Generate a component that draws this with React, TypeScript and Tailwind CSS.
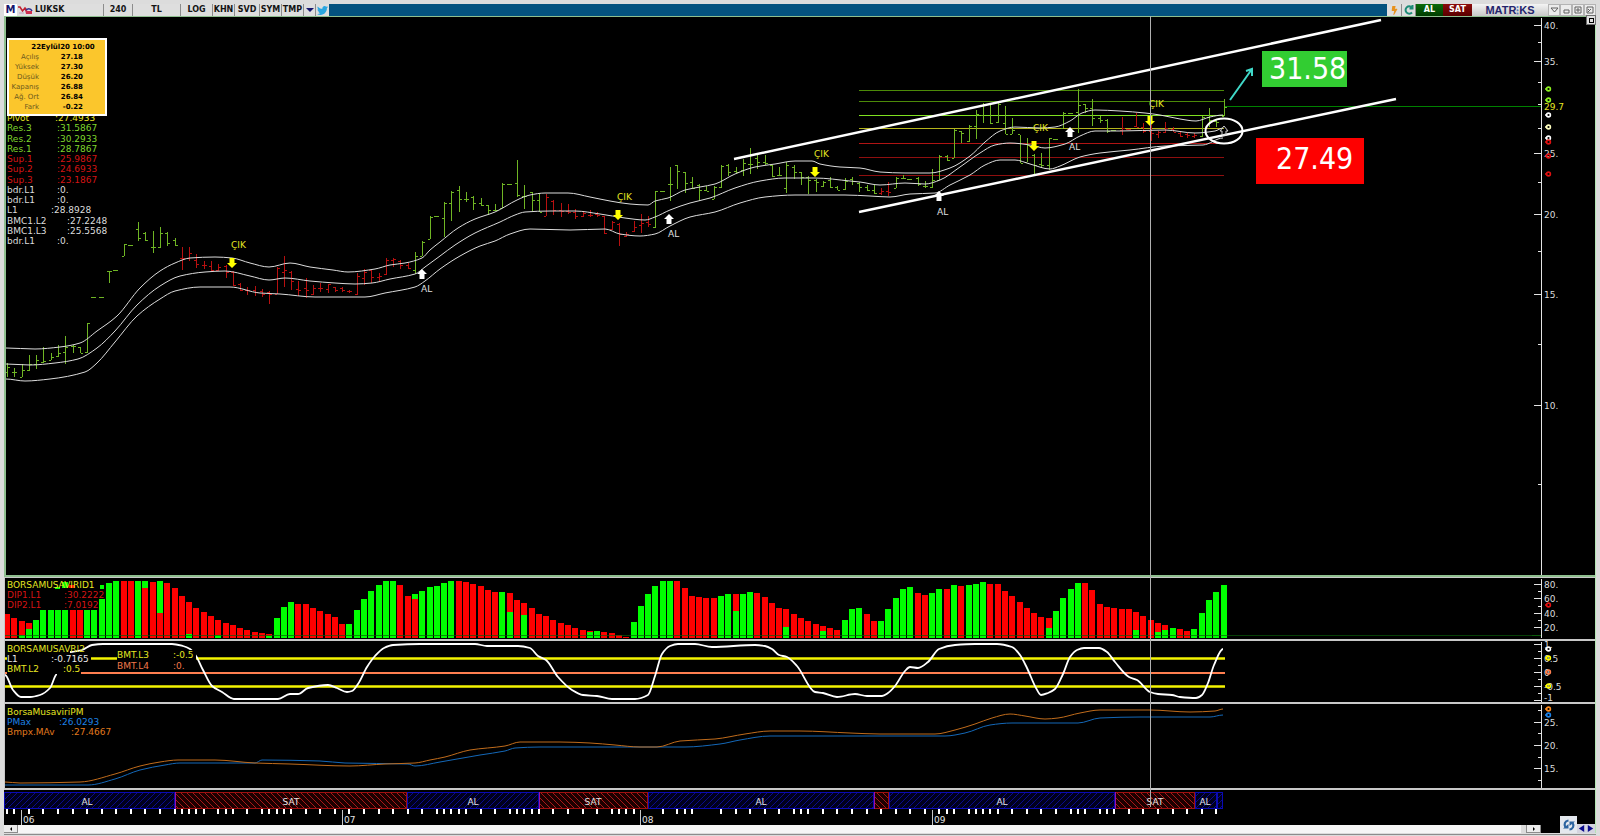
import type { ReactNode } from "react";
import { FaBolt, FaTwitter } from "react-icons/fa";

const LIME = "#7fd62c";
const RED = "#d41414";
const STEP = 7.285;
const barX = (i: number) => 7 + i * STEP;

type Point = [number, number];
type Ohlc = [high: number, low: number, open: number, close: number];

// One row per bar, in chart coordinates. Rows with a single value are flat bars.
const PRICES: (Ohlc | [number])[] = [
  [363, 377, 372, 367], [368, 377, 372, 372], [364, 377, 377, 370], [355, 371, 370, 364], [355, 369, 364, 360],
  [347, 363, 362, 361], [353, 360, 360, 357], [345, 357, 356, 353], [336, 364, 352, 347], [345, 353, 346, 346],
  [347, 353, 347, 353], [323, 353, 352, 323], [297], [297], [271, 283, 271, 271],
  [270], [244, 256, 256, 244], [245], [222, 241, 229, 238], [232, 241, 233, 240],
  [231, 253, 247, 247], [227, 248, 247, 233], [232, 246, 233, 243], [238, 246, 240, 245], [247, 270, 258, 258],
  [247, 261, 258, 253], [254, 268, 260, 264], [261, 269, 265, 265], [261, 271, 266, 270], [264, 271, 270, 267],
  [265, 278, 266, 272], [271, 286, 272, 285], [283, 291, 284, 290], [287, 295, 290, 290], [286, 296, 290, 292],
  [289, 297, 291, 294], [291, 304, 292, 294], [267, 294, 294, 268], [256, 287, 272, 270], [271, 290, 272, 281],
  [281, 296, 289, 290], [278, 298, 288, 290], [285, 295, 294, 288], [283, 292, 288, 288], [284, 293, 289, 284],
  [287, 292, 287, 290], [287, 292, 288, 290], [290, 293, 291, 291], [273, 295, 294, 276], [269, 285, 278, 272],
  [270, 283, 270, 277], [273, 281, 277, 276], [258, 275, 274, 260], [258, 267, 260, 259], [260, 269, 261, 265],
  [263, 269, 265, 268], [252, 274, 270, 256], [241, 256, 256, 242], [216, 239, 239, 217], [216],
  [202, 237, 218, 203], [191, 221, 203, 192], [186, 212, 190, 199], [192, 202, 199, 199], [196, 210, 197, 203],
  [198, 206, 203, 205], [205, 215, 205, 210], [204, 211, 210, 210], [183, 208, 208, 184], [184],
  [160, 197, 183, 195], [185, 209, 196, 196], [192, 211, 192, 200], [193, 212, 200, 212], [194, 216, 216, 197],
  [200, 215, 201, 210], [203, 217, 210, 211], [204, 214, 211, 212], [209, 219, 212, 216], [211, 217, 216, 213],
  [210, 217, 215, 215], [212, 217, 214, 215], [216, 234, 216, 233], [221, 230, 229, 222], [223, 246, 224, 234],
  [232, 237, 236, 234], [221, 232, 231, 227], [214, 233, 225, 223], [216, 227, 222, 224], [191, 228, 227, 191],
  [191], [167, 201, 184, 184], [165, 189, 165, 171], [172, 193, 172, 183], [177, 189, 182, 188],
  [184, 201, 185, 190], [186, 191, 190, 191], [186, 199, 199, 187], [165, 188, 187, 166], [164, 176, 165, 172],
  [167, 173, 171, 172], [159, 176, 170, 163], [148, 174, 164, 164], [154, 169, 158, 162], [155, 165, 162, 163],
  [165, 177, 165, 176], [167, 176, 175, 175], [162, 193, 188, 165], [165, 179, 167, 172], [172, 185, 172, 177],
  [176, 194, 177, 180], [179, 192, 180, 182], [181, 187, 186, 182], [177, 188, 180, 187], [186, 190, 187, 190],
  [178, 190, 189, 181], [177, 185, 179, 181], [182, 192, 183, 187], [185, 191, 187, 190], [185, 194, 190, 193],
  [188, 195, 193, 191], [182, 196, 191, 192], [177, 188, 188, 178], [175, 179, 178, 178], [179],
  [177, 186, 178, 184], [181, 188, 186, 186], [169, 188, 187, 180], [155, 180, 180, 156], [155, 161, 156, 160],
  [129, 158, 158, 130], [131, 143, 131, 133], [125, 142, 141, 126], [110, 139, 126, 114], [103, 123, 115, 104],
  [104, 124, 104, 123], [103, 123, 122, 104], [106, 134, 123, 134], [118, 134, 134, 130], [135, 163, 134, 163],
  [138, 162, 162, 145], [154, 174, 155, 165], [153, 167, 164, 165], [138, 170, 165, 138], [139],
  [112, 128, 128, 113], [113], [89, 133, 112, 105], [104, 113, 104, 108], [99, 126, 108, 118],
  [116, 123, 118, 120], [119, 133, 120, 131], [130], [117, 135, 130, 128], [129],
  [113, 127, 126, 127], [123, 133, 127, 131], [125, 141, 131, 133], [131, 138, 134, 132], [122, 133, 132, 128],
  [127, 132, 129, 132], [131, 137, 133, 136], [132, 138, 134, 135], [133, 138, 136, 135], [116, 137, 136, 117],
  [108, 127, 117, 120], [120, 127, 121, 122], [99, 116, 116, 107],
];

// Bars inside these index ranges belong to a sell phase and are drawn red.
const SELL_RANGES: Point[] = [[24, 55], [74, 88], [120, 121], [153, 163]];
const isSell = (i: number) => SELL_RANGES.some(([a, b]) => i >= a && i <= b);

const UPPER: Point[] = [
  [6, 348], [35, 349], [60, 347], [80, 343], [97, 331], [117, 316], [140, 288], [160, 271], [175, 263], [190, 258],
  [215, 257], [232, 258], [250, 263], [269, 267], [290, 263], [310, 267], [333, 270], [348, 272], [375, 269],
  [390, 265], [405, 263], [422, 258], [430, 250], [440, 242], [458, 228], [475, 219], [495, 212], [517, 200],
  [530, 195], [545, 193], [568, 193], [590, 197], [610, 201], [630, 204], [648, 205], [655, 201], [668, 198],
  [685, 190], [700, 187], [715, 184], [735, 174], [755, 167], [775, 164], [795, 161], [812, 161], [820, 164],
  [840, 167], [860, 168], [880, 172], [905, 173], [930, 173], [950, 168], [970, 156], [985, 142], [1000, 131],
  [1015, 127], [1040, 128], [1055, 127], [1070, 121], [1082, 113], [1095, 110], [1120, 111], [1145, 113],
  [1160, 115], [1180, 119], [1196, 121], [1210, 117], [1223, 115],
];
const MIDDLE: Point[] = [
  [6, 364], [30, 365], [55, 363], [78, 359], [97, 348], [115, 331], [137, 305], [160, 286], [180, 276], [205, 272],
  [225, 271], [250, 276], [269, 280], [285, 278], [310, 281], [335, 283], [355, 284], [372, 283], [390, 279],
  [415, 274], [425, 267], [440, 256], [455, 245], [475, 233], [500, 222], [515, 215], [525, 212], [550, 211],
  [575, 211], [600, 214], [625, 218], [645, 220], [655, 217], [670, 210], [690, 203], [710, 198], [735, 188],
  [760, 181], [785, 178], [815, 178], [850, 181], [860, 182], [880, 185], [905, 183], [925, 184], [940, 180],
  [960, 167], [980, 153], [995, 145], [1010, 143], [1030, 145], [1045, 148], [1065, 144], [1080, 136], [1095, 131],
  [1120, 131], [1165, 130], [1195, 133], [1215, 131], [1223, 128],
];
const LOWER: Point[] = [
  [6, 379], [25, 381], [50, 379], [85, 372], [97, 363], [115, 342], [137, 316], [160, 299], [175, 291], [200, 287],
  [230, 287], [260, 293], [280, 294], [315, 297], [365, 297], [385, 293], [415, 287], [425, 281], [440, 269],
  [460, 256], [480, 246], [495, 241], [510, 234], [530, 229], [570, 230], [605, 229], [620, 234], [640, 236],
  [655, 234], [670, 226], [690, 217], [715, 212], [740, 203], [765, 197], [795, 195], [845, 195], [870, 196],
  [890, 197], [910, 194], [935, 193], [950, 185], [970, 175], [985, 165], [1000, 160], [1015, 160], [1030, 164],
  [1050, 169], [1060, 166], [1080, 157], [1100, 153], [1130, 150], [1165, 146], [1203, 145], [1223, 138],
];

// Histogram: colour + height in thirds of a pixel; "/n" is a stacked lower part in the other colour.
const HISTOGRAM = (
  "r72 r60 r52/10 r44/26 g54 g86 g86 g86 g86 r86 r86 g86 g86 g117 g166 g171 r171 r171 g171 g171/151 " +
  "r168 g171/76 r166 r150 r127 r108/12 r91 r78 r66 r55/9 r45 r38 r30 r24 r19 r15 r11/6 g60 g93 g108 " +
  "r103 r103 r90 r81 r73 r63 r42 g42 g84 g117 g142 g160 g171 g171 r159 r125 g132/117 g142 g153 g157 " +
  "g165 g171 r171 r168 r163 r156 r144 r138 g138 r135/78 r114 r104/69 r89 r72 r66 r55 r45 r38 r30 r24 " +
  "r22/18 g22 r18 r15 r9 r4 g48 g96 g132 g156 g171 g171 r171 r150 r126 r122 r120 r120 g126 g132 " +
  "r132/82 g132 g139 r135 r123 r104 r90 r86/32 r72 r60 r51 r42 r37/22 r30 r24 g53 g87 g91 r73 r51 " +
  "g51 g87 g120 g147 g153 r135 r129 g135 g147 r147 g159 r156 g159 g162 g168 r161 r161 r142 r126 r108 " +
  "r91 r75 r63 r60/30 g81 g120 g147 g166 r166 r144 r102 r93 r90 r88 r88 r78/24 r66 r55 r45/18 r39/24 " +
  "g30 r27 r22 g27 g75 g114 g139 g160"
).split(" ");

const OSC_START: Point[] = [[5, 675], [13, 690], [21, 697], [30, 697], [40, 695], [50, 688], [57, 674]];
const OSC: Point[] = [
  [70, 652], [82, 650], [92, 645], [103, 644], [172, 644], [183, 646], [190, 649], [196, 656], [203, 670], [212, 686],
  [222, 692], [234, 699], [278, 699], [290, 694], [298, 694], [308, 688], [328, 685], [337, 688], [347, 692],
  [352, 691], [358, 684], [367, 667], [375, 656], [384, 648], [393, 645], [420, 644], [475, 644], [487, 646],
  [518, 646], [530, 648], [538, 656], [546, 660], [558, 677], [572, 690], [583, 695], [597, 696], [612, 699],
  [635, 699], [648, 695], [655, 676], [662, 654], [670, 646], [678, 644], [695, 644], [712, 647], [755, 645],
  [765, 646], [772, 649], [779, 655], [787, 657], [797, 666], [815, 692], [823, 693], [837, 697], [855, 694],
  [867, 696], [882, 696], [888, 693], [895, 686], [905, 671], [910, 667], [918, 668], [928, 662], [939, 649],
  [955, 645], [975, 644], [997, 644], [1012, 647], [1020, 655], [1027, 668], [1036, 688], [1041, 695], [1048, 693],
  [1055, 689], [1063, 674], [1070, 657], [1077, 650], [1084, 648], [1099, 648], [1107, 652], [1115, 662],
  [1129, 677], [1137, 680], [1150, 692], [1158, 694], [1172, 695], [1180, 697], [1196, 698], [1202, 695],
  [1208, 683], [1214, 665], [1223, 649],
];

const MAV: Point[] = [
  [5, 782], [20, 783], [80, 782], [115, 774], [140, 766], [160, 762], [178, 760], [215, 760], [255, 763], [290, 764],
  [350, 766], [385, 764], [415, 763], [430, 760], [445, 757], [470, 750], [505, 746], [520, 742], [560, 742],
  [590, 743], [615, 745], [640, 747], [657, 747], [680, 741], [715, 739], [745, 734], [770, 731], [800, 731],
  [850, 733], [880, 734], [935, 734], [955, 730], [975, 724], [992, 718], [1010, 714], [1025, 716], [1045, 719],
  [1058, 718], [1080, 713], [1100, 710], [1150, 710], [1190, 712], [1215, 711], [1223, 709],
];
const PMAX: Point[] = [
  [5, 785], [88, 785], [115, 779], [140, 770], [165, 765], [180, 763], [255, 763], [262, 760], [320, 761], [345, 763],
  [408, 764], [415, 766], [440, 762], [480, 755], [505, 751], [515, 748], [540, 747], [685, 747], [720, 744],
  [740, 740], [770, 736], [945, 736], [965, 733], [990, 725], [1012, 723], [1078, 723], [1100, 718], [1140, 717],
  [1210, 717], [1223, 715],
];

const PHASES = [
  { from: 4, to: 175, sell: false, label: "AL", at: 87 },
  { from: 175, to: 407, sell: true, label: "SAT", at: 291 },
  { from: 407, to: 539, sell: false, label: "AL", at: 473 },
  { from: 539, to: 648, sell: true, label: "SAT", at: 593 },
  { from: 648, to: 874, sell: false, label: "AL", at: 761 },
  { from: 874, to: 889, sell: true, label: "", at: 0 },
  { from: 889, to: 1115, sell: false, label: "AL", at: 1002 },
  { from: 1115, to: 1195, sell: true, label: "SAT", at: 1155 },
  { from: 1195, to: 1217, sell: false, label: "AL", at: 1205 },
  { from: 1217, to: 1223, sell: false, label: "", at: 0 },
];

const DAY_TICKS = [
  0, 1, 3, 5, 7, 9, 11, 13, 15, 17, 19, 21, 23, 24, 25, 26, 27, 29, 30, 31, 33, 35, 36, 37, 38, 39, 41, 43, 45, 47, 49,
  51, 53, 55, 57, 59, 60, 61, 62, 63, 65, 67, 69, 70, 71, 72, 73, 75, 77, 79, 81, 83, 84, 85, 86, 90, 92, 93, 94, 98,
  100, 102, 104, 106, 108, 109, 110, 112, 114, 116, 118, 120, 122, 124, 126, 128, 129, 130, 132, 133, 134, 135, 136,
  138, 140, 142, 144, 146, 147, 148, 150, 151, 152, 154, 156, 158, 160, 162, 164, 166,
];

const MONTHS = [
  { x: 21, label: "06" },
  { x: 342, label: "07" },
  { x: 640, label: "08" },
  { x: 932, label: "09" },
];

const SIGNALS = [
  { x: 232, y: 263, up: false, tx: 231, ty: 248 },
  { x: 422, y: 274, up: true, tx: 421, ty: 292 },
  { x: 618, y: 215, up: false, tx: 617, ty: 200 },
  { x: 669, y: 219, up: true, tx: 668, ty: 237 },
  { x: 815, y: 172, up: false, tx: 814, ty: 157 },
  { x: 939, y: 196, up: true, tx: 937, ty: 215 },
  { x: 1034, y: 146, up: false, tx: 1033, ty: 131 },
  { x: 1070, y: 132, up: true, tx: 1069, ty: 150 },
  { x: 1150, y: 121, up: false, tx: 1149, ty: 107 },
];

const LEVELS = [
  { y: 90, color: "#4c8a08" },
  { y: 101, color: "#4c8a08" },
  { y: 115, color: "#7fe020" },
  { y: 128, color: "#b4b41c" },
  { y: 143, color: "#b01414" },
  { y: 157, color: "#8f0f0f" },
  { y: 175, color: "#8f0f0f" },
];

type LegendRow = { name: string; value: string; x: number; y: number; color: string; nx?: number; back?: number };

const MAIN_LEGEND: LegendRow[] = [
  { name: "Pivot", value: ":27.4933", x: 55, y: 121, color: "#e6e622" },
  { name: "Res.3", value: ":31.5867", x: 57, y: 131, color: LIME },
  { name: "Res.2", value: ":30.2933", x: 57, y: 142, color: LIME },
  { name: "Res.1", value: ":28.7867", x: 57, y: 152, color: LIME },
  { name: "Sup.1", value: ":25.9867", x: 57, y: 162, color: RED },
  { name: "Sup.2", value: ":24.6933", x: 57, y: 172, color: RED },
  { name: "Sup.3", value: ":23.1867", x: 57, y: 183, color: RED },
  { name: "bdr.L1", value: ":0.", x: 57, y: 193, color: "#dcdcdc" },
  { name: "bdr.L1", value: ":0.", x: 57, y: 203, color: "#dcdcdc" },
  { name: "L1", value: ":28.8928", x: 51, y: 213, color: "#dcdcdc" },
  { name: "BMC1.L2", value: ":27.2248", x: 67, y: 224, color: "#dcdcdc" },
  { name: "BMC1.L3", value: ":25.5568", x: 67, y: 234, color: "#dcdcdc" },
  { name: "bdr.L1", value: ":0.", x: 57, y: 244, color: "#dcdcdc" },
];

const QUOTE = [
  ["Açılış", "27.18"],
  ["Yüksek", "27.30"],
  ["Düşük", "26.20"],
  ["Kapanış", "26.88"],
  ["Ağ. Ort", "26.84"],
  ["Fark", "-0.22"],
];

// Smooth path through the points: tangents are flat at turning points, so it never overshoots.
function curve(pts: Point[]) {
  const slope = pts.map((p, i) => {
    const a = pts[i - 1];
    const b = pts[i + 1];
    if (!a || !b) return 0;
    const left = (p[1] - a[1]) / (p[0] - a[0]);
    const right = (b[1] - p[1]) / (b[0] - p[0]);
    return left * right <= 0 ? 0 : (2 * left * right) / (left + right);
  });
  return pts
    .map(([x, y], i) => {
      if (i === 0) return `M${x} ${y}`;
      const [px, py] = pts[i - 1];
      const t = (x - px) / 3;
      return `C${px + t} ${py + slope[i - 1] * t} ${x - t} ${y - slope[i] * t} ${x} ${y}`;
    })
    .join("");
}

function Legend({ rows }: { rows: LegendRow[] }) {
  return (
    <>
      {rows.map((r) => (
        <g key={r.y + r.name} fill={r.color}>
          {r.back && <rect x={r.nx ?? 7} y={r.y - 8} width={r.back} height={10} fill="#000" />}
          <text x={r.nx ?? 7} y={r.y}>{r.name}</text>
          <text x={r.x} y={r.y}>{r.value}</text>
        </g>
      ))}
    </>
  );
}

function Marker({ y, color }: { y: number; color: string }) {
  return (
    <g fill="none" stroke={color} strokeWidth="1.6">
      <circle cx="1548.5" cy={y} r="1.9" />
      <path d={`M1547 ${y}h-2`} />
    </g>
  );
}

type Tick = { y: number; label?: string };

function Axis({ top, bottom, ticks, children }: { top: number; bottom: number; ticks: Tick[]; children?: ReactNode }) {
  return (
    <g transform={`translate(-1532 ${-top})`}>
      <path d={`M1541.5 ${top + 1}V${bottom}`} stroke="#e4e4e4" />
      {ticks.map((t) => (
        <g key={t.y}>
          <path d={`M${t.label ? 1534 : 1538} ${t.y + 0.5}H1541`} stroke="#e4e4e4" />
          {t.label && (
            <text x="1544" y={Math.min(t.y + 4, bottom - 1)} fill="#dcdcdc">{t.label}</text>
          )}
        </g>
      ))}
      {children}
    </g>
  );
}

function Arrow({ x, y, up }: { x: number; y: number; up: boolean }) {
  const d = up ? "M0-5l5 5h-2.500v5h-5v-5h-2.500z" : "M0 5l-5-5h2.500v-5h5v5h2.500z";
  return <path d={d} transform={`translate(${x} ${y})`} fill={up ? "#fff" : "#ff0"} />;
}

function MainPanel() {
  return (
    <section aria-label="LUKSK 240" className="flex h-[561px] border-t border-l-2 border-b-2 border-[#8fbf8f] bg-black">
      <svg className="h-full min-w-0 flex-1">
        <g transform="translate(-6 -17)">
          <g shapeRendering="crispEdges">
            {LEVELS.map((l) => (
              <path key={l.y} d={`M859 ${l.y}.5H1224`} stroke={l.color} />
            ))}
            <path d="M1224 106.500H1560" stroke="#008000" strokeWidth="1" />
          </g>
          <g shapeRendering="crispEdges">
            {PRICES.map((p, i) => {
              const x = Math.round(barX(i));
              const color = isSell(i) ? "#b81010" : "#6fb524";
              const d =
                p.length === 1
                  ? `M${x - 3} ${p[0]}.5h5`
                  : `M${x}.5 ${p[0]}V${p[1]}M${x - 2} ${p[2]}.5h2M${x + 1} ${p[3]}.5h2`;
              return <path key={i} d={d} stroke={color} />;
            })}
          </g>
          <g fill="none" stroke="#dcdcdc" strokeWidth="1">
            <path d={curve(UPPER)} />
            <path d={curve(MIDDLE)} />
            <path d={curve(LOWER)} />
          </g>
          <g stroke="#fff" strokeWidth="3" fill="none">
            <path d="M734 159L1381 20" strokeWidth="2.5" />
            <path d="M859 212L1396 99" strokeWidth="2.5" />
            <ellipse cx="1224" cy="131" rx="18.500" ry="12.500" strokeWidth="2" />
          </g>
          <path d="M1224 126l4 5h-2v4h-4v-4h-2z" fill="none" stroke="#ccc" />
          <path d="M1230 100L1252 69M1246 71L1252 69L1252 76" fill="none" stroke="#40d8c8" strokeWidth="2" />
          {SIGNALS.map((s) => (
            <g key={s.x}>
              <Arrow x={s.x} y={s.y} up={s.up} />
              <text x={s.tx} y={s.ty} fill={s.up ? "#e0e0e0" : "#e6e622"}>{s.up ? "AL" : "ÇIK"}</text>
            </g>
          ))}
          <rect x="1262" y="51" width="85" height="36" fill="#32cd32" />
          <rect x="1256" y="138" width="108" height="46" fill="#fe0000" />
          <g className="font-['DejaVu_Sans_Condensed','DejaVu_Sans',sans-serif] text-[30px]" fill="#fff">
            <text x="1269" y="79">31.58</text>
            <text x="1276" y="169">27.49</text>
          </g>
          <Legend rows={MAIN_LEGEND} />
        </g>
      </svg>
      <svg className="h-full w-[63px] shrink-0">
        <Axis
          top={17}
          bottom={575}
          ticks={[
            { y: 25, label: "40." }, { y: 42 }, { y: 61, label: "35." }, { y: 82 }, { y: 104 }, { y: 128 },
            { y: 153, label: "25." }, { y: 182 }, { y: 214, label: "20." }, { y: 251 }, { y: 294, label: "15." },
            { y: 344 }, { y: 405, label: "10." }, { y: 484 },
          ]}
        >
          <path d="M1532 106.500H1541" stroke="#008000" />
          <text x="1544" y="110" fill="#e6e622">29.7</text>
          <Marker y={89} color="#8cf01e" />
          <Marker y={100} color="#8cf01e" />
          <Marker y={115} color="#fff" />
          <Marker y={127} color="#ffffc0" />
          <Marker y={138} color="#fff" />
          <Marker y={142} color="#e01010" />
          <Marker y={156} color="#e01010" />
          <Marker y={174} color="#e01010" />
        </Axis>
      </svg>
    </section>
  );
}

function HistogramPanel() {
  return (
    <section aria-label="BORSAMUSAVIRID1" className="flex h-[64px] border-t border-l border-b-2 border-[#c8c8c8] bg-black">
      <svg className="h-full min-w-0 flex-1">
        <g transform="translate(-5 -578)">
          <g shapeRendering="crispEdges">
            {HISTOGRAM.map((code, i) => {
              const red = code[0] === "r";
              const [h, inner] = code.slice(1).split("/").map(Number);
              const x = Math.round(barX(i)) - 3;
              return (
                <g key={i}>
                  <rect x={x} y={638 - h / 3} width="6" height={h / 3} fill={red ? "#fe0000" : "#00fe00"} />
                  {inner && (
                    <rect x={x} y={638 - inner / 3} width="6" height={inner / 3} fill={red ? "#00fe00" : "#fe0000"} />
                  )}
                </g>
              );
            })}
            <path d="M5 635.500H1560" stroke="#0b5c0b" opacity="0.7" />
            <path d="M55 587h5v2h-5zM62 582h6v6h-6zM100 585h4v4h-4z" fill="#00fe00" />
            <path d="M69 585h6v3h-6z" fill="#fe0000" />
          </g>
          <Legend
            rows={[
              { name: "BORSAMUSAVIRID1", value: "", x: 65, y: 588, color: "#e6e622" },
              { name: "DIP1.L1", value: ":30.2222", x: 64, y: 598, color: RED, back: 92 },
              { name: "DIP2.L1", value: ":7.0192", x: 64, y: 608, color: RED, back: 92 },
            ]}
          />
        </g>
      </svg>
      <svg className="h-full w-[63px] shrink-0">
        <Axis
          top={578}
          bottom={638}
          ticks={[
            { y: 584, label: "80." }, { y: 591 }, { y: 598, label: "60." }, { y: 606 }, { y: 613, label: "40." },
            { y: 620 }, { y: 627, label: "20." },
          ]}
        >
          <path d="M1532 635.500H1541" stroke="#0b5c0b" />
          <Marker y={605} color="#e01010" />
        </Axis>
      </svg>
    </section>
  );
}

function OscillatorPanel() {
  return (
    <section aria-label="BORSAMUSAVRI2" className="flex h-[63px] border-l border-b-2 border-[#c8c8c8] bg-black">
      <svg className="h-full min-w-0 flex-1">
        <g transform="translate(-5 -641)">
          <path d="M5 658.500H1225M5 686.500H1225" stroke="#f4f400" strokeWidth="2.500" />
          <path d="M5 673H1225" stroke="#ff7f50" strokeWidth="2" />
          <g fill="none" stroke="#fff" strokeWidth="1.800">
            <path d={curve(OSC_START)} />
            <path d={curve(OSC)} />
          </g>
          <Legend
            rows={[
              { name: "BORSAMUSAVRI2", value: "", x: 65, y: 652, color: "#e6e622" },
              { name: "L1", value: ":-0.7165", x: 51, y: 662, color: "#e8e8e8", back: 84 },
              { name: "BMT.L2", value: ":0.5", x: 63, y: 672, color: "#e6e622", back: 74 },
              { name: "BMT.L3", value: ":-0.5", x: 173, y: 658, color: "#e6e622", nx: 117, back: 79 },
              { name: "BMT.L4", value: ":0.", x: 173, y: 669, color: "#f0784a", nx: 117, back: 70 },
            ]}
          />
        </g>
      </svg>
      <svg className="h-full w-[63px] shrink-0">
        <Axis
          top={641}
          bottom={702}
          ticks={[
            { y: 644, label: "1." }, { y: 651 }, { y: 658, label: "0.5" }, { y: 665 }, { y: 672, label: "0" },
            { y: 679 }, { y: 686, label: "-0.5" }, { y: 693 }, { y: 700, label: "-1" },
          ]}
        >
          <Marker y={649} color="#fff" />
          <Marker y={658} color="#ff0" />
          <Marker y={672} color="#ff7f50" />
          <Marker y={686} color="#ff0" />
        </Axis>
      </svg>
    </section>
  );
}

function TrendPanel() {
  return (
    <section aria-label="BorsaMusaviriPM" className="flex h-[86px] border-l border-b-2 border-[#c8c8c8] bg-black">
      <svg className="h-full min-w-0 flex-1">
        <g transform="translate(-5 -704)">
          <g fill="none" strokeWidth="1">
            <path d={curve(PMAX)} stroke="#1468b8" />
            <path d={curve(MAV)} stroke="#c06c1c" />
          </g>
          <Legend
            rows={[
              { name: "BorsaMusaviriPM", value: "", x: 65, y: 715, color: "#e6e622" },
              { name: "PMax", value: ":26.0293", x: 59, y: 725, color: "#1e82e6" },
              { name: "Bmpx.MAv", value: ":27.4667", x: 71, y: 735, color: "#e07a1e" },
            ]}
          />
        </g>
      </svg>
      <svg className="h-full w-[63px] shrink-0">
        <Axis
          top={704}
          bottom={788}
          ticks={[
            { y: 710 }, { y: 722, label: "25." }, { y: 733 }, { y: 745, label: "20." }, { y: 757 },
            { y: 768, label: "15." }, { y: 780 },
          ]}
        >
          <Marker y={709} color="#ff8c1e" />
          <Marker y={715} color="#1e82e6" />
        </Axis>
      </svg>
    </section>
  );
}

function PhaseStrip() {
  return (
    <svg className="block h-[35px] w-full bg-black">
      <defs>
        <pattern id="buy" width="6" height="6" patternUnits="userSpaceOnUse">
          <rect width="6" height="6" fill="#00001c" />
          <path d="M-1 7L7-1M-1 1L1-1M5 7L7 5" stroke="#0a0a8c" />
        </pattern>
        <pattern id="sell" width="6" height="6" patternUnits="userSpaceOnUse">
          <rect width="6" height="6" fill="#1c0000" />
          <path d="M-1-1L7 7M5-1L7 1M-1 5L1 7" stroke="#a81818" />
        </pattern>
      </defs>
      <g transform="translate(-4 -790)">
        {PHASES.map((p) => (
          <g key={p.from}>
            <rect
              x={p.from + 0.5}
              y="792.500"
              width={p.to - p.from - 1}
              height="16"
              fill={p.sell ? "url(#sell)" : "url(#buy)"}
              stroke={p.sell ? "#a01010" : "#0a0ab4"}
            />
            {p.sell && <path d={`M${p.from}.5 792V809M${p.to}.5 792V809`} stroke="#a010a0" />}
          </g>
        ))}
        {PHASES.filter((p) => p.label).map((p) => (
          <text key={p.at} x={p.at} y="805" textAnchor="middle" fill="#e4e4e4">{p.label}</text>
        ))}
        <g shapeRendering="crispEdges">
          {DAY_TICKS.map((i) => (
            <rect key={i} x={Math.round(barX(i)) - 1} y="809" width="2" height="5" fill="#fff" />
          ))}
        </g>
        {MONTHS.map((m) => (
          <g key={m.label}>
            <path d={`M${m.x}.5 810V825`} stroke="#c8c8c8" />
            <text x={m.x + 2} y="823" fill="#e4e4e4">{m.label}</text>
          </g>
        ))}
      </g>
    </svg>
  );
}

const TOOL = "border-r border-[#8c8c8c] bg-[#dedede] text-center leading-3 shrink-0";

function Toolbar() {
  return (
    <header className="flex h-3 overflow-hidden bg-[#04527f] text-[8px] font-bold text-[#141414]">
      <button className="w-[13px] shrink-0 bg-white text-[10px] leading-3 text-[#16166e]">M</button>
      <button aria-label="Grafik" className="flex w-[17px] shrink-0 items-center justify-center bg-[#dedede]">
        <svg width="15" height="10" viewBox="0 0 15 10" fill="none">
          <path d="M0 2h2l2.500 4L7 3l2 2.500" stroke="#c02030" strokeWidth="1.500" />
          <path d="M1 8h5" stroke="#c0a0c0" />
          <path d="M7.500 6a3.500 3.500 0 016.500 0" stroke="#303090" strokeWidth="1.500" />
          <path d="M7 4.500l2.500 1.500H14v3H8z" fill="#d03050" />
        </svg>
      </button>
      <input aria-label="Sembol" defaultValue="LUKSK" className="w-[70px] shrink-0 border-r border-[#8c8c8c] bg-[#dedede] pl-px" />
      <button className={`${TOOL} w-[29px]`}>240</button>
      <button className={`${TOOL} w-[48px]`}>TL</button>
      <button className={`${TOOL} w-[32px]`}>LOG</button>
      <button className={`${TOOL} w-[22px]`}>KHN</button>
      <button className={`${TOOL} w-[25px]`}>SVD</button>
      <button className={`${TOOL} w-[22px]`}>SYM</button>
      <button className={`${TOOL} w-[22px]`}>TMP</button>
      <button aria-label="Menü" className={`${TOOL} flex w-[12px] items-center justify-center`}>
        <svg width="8" height="4" viewBox="0 0 8 4"><path d="M0 0h8L4 4z" fill="#16166e" /></svg>
      </button>
      <button aria-label="Twitter" className="flex w-[13px] shrink-0 items-center justify-center bg-[#dedede]">
        <FaTwitter size={11} color="#2aa6e0" />
      </button>
      <div className="flex-1" />
      <button aria-label="Hızlı emir" className={`${TOOL} flex w-[15px] items-center justify-center`}>
        <FaBolt size={9} color="#e8921e" />
      </button>
      <button aria-label="Yenile" className={`${TOOL} flex w-[14px] items-center justify-center`}>
        <svg width="10" height="10" viewBox="0 0 10 10" fill="none" stroke="#1e8c78" strokeWidth="2">
          <path d="M8 7.500A3.700 3.700 0 118 2.500M8.500 0v3.500H5.500" />
        </svg>
      </button>
      <button className="w-[27px] shrink-0 bg-linear-to-b from-[#0c6c0c] to-[#013c01] text-center leading-3 text-white">AL</button>
      <button className="w-[29px] shrink-0 bg-linear-to-b from-[#8c0c0c] to-[#5a0000] text-center leading-3 text-white">SAT</button>
      <div className="w-[76px] shrink-0 bg-linear-to-b from-[#f4f4f4] to-[#c8c8c8] text-center font-['Liberation_Sans',sans-serif] text-[11px] leading-3 text-[#24246c]">
        MATR<span className="text-[#5a78b4]">⁝</span>KS
      </div>
      {["M1 2h7L4.500 6z", "M2 4h5v3h-5z", "M1 1h6v6H1zM3 3h2v2H3z", "M1 1h6v6H1zM2 3l2 2M5 3l-3 3"].map((d, i) => (
        <button key={d} aria-label={["Sabitle", "Küçült", "Büyüt", "Kapat"][i]} className="flex w-[12px] shrink-0 items-center justify-center border border-[#b4b4b4] bg-[#ececec]">
          <svg width="9" height="8" viewBox="0 0 9 8" fill="none" stroke="#606060"><path d={d} /></svg>
        </button>
      ))}
    </header>
  );
}

function QuoteCard() {
  return (
    <table className="absolute top-[34px] left-[3px] w-[100px] border-2 border-white bg-[#fbc62c] text-[7px] text-black">
      <thead>
        <tr>
          <th colSpan={2} className="h-[13px] pt-[2px] pl-[12px] text-center leading-[10px]">22Eylül20 10:00</th>
        </tr>
      </thead>
      <tbody>
        {QUOTE.map(([name, value]) => (
          <tr key={name} className="leading-[10px]">
            <td className="w-[31px] text-right text-[#6e5a1e]">{name}</td>
            <td className="pr-[22px] text-right font-bold">{value}</td>
          </tr>
        ))}
        <tr className="h-[3px]" />
      </tbody>
    </table>
  );
}

function Footer() {
  return (
    <footer className="flex h-[8px] bg-black">
      <div className="flex min-w-0 flex-1 bg-[#f6f6f6]">
        <button aria-label="Sola kaydır" className="flex w-[14px] items-center justify-center border-r border-b border-[#8c8c8c] bg-[#ececec]">
          <svg width="4" height="4" viewBox="0 0 4 4"><path d="M3 0v4L1 2z" /></svg>
        </button>
        <div className="flex-1" />
        <div className="w-[6px] border-r border-[#8c8c8c] bg-[#dcdcdc]" />
        <button aria-label="Sağa kaydır" className="flex w-[14px] items-center justify-center border-r border-b border-[#8c8c8c] bg-[#ececec]">
          <svg width="4" height="4" viewBox="0 0 4 4"><path d="M1 0v4l2-2z" /></svg>
        </button>
      </div>
      <div className="flex w-[54px] shrink-0 items-end justify-end">
        <button aria-label="Yenile" className="flex size-[17px] shrink-0 items-center justify-center bg-[#e4e8ee]">
          <svg width="14" height="14" viewBox="0 0 14 14" fill="none" stroke="#2c64a0" strokeWidth="2.200">
            <path d="M6.500 2.500C3 3 1.500 6 3.500 9.500M7.500 11.500c3.500-.5 5-3.500 3-7" />
            <path d="M1 10.500h5.500V6zM13 3.500H7.500V8z" fill="#2c64a0" stroke="none" />
          </svg>
        </button>
        {["M8 1v8L2 5z", "M2 1v8l6-4z"].map((d, i) => (
          <button key={d} aria-label={i ? "Sonraki" : "Önceki"} className="flex size-[9px] shrink-0 items-center justify-center bg-[#d4d4e0]">
            <svg width="9" height="9" viewBox="0 0 10 10"><path d={d} fill="#0a0a8c" /></svg>
          </button>
        ))}
      </div>
    </footer>
  );
}

export default function App() {
  return (
    <main className="min-h-screen bg-[#dcdcdc] pt-1 pr-1 pl-1 font-['DejaVu_Sans',sans-serif] text-[9px]">
      <div className="relative">
        <Toolbar />
        <div className="border-r border-[#b4e6b4]">
          <MainPanel />
          <HistogramPanel />
          <OscillatorPanel />
          <TrendPanel />
          <PhaseStrip />
          <Footer />
        </div>
        <button aria-label="Pencere" className="absolute top-[11px] right-0 flex size-[10px] items-center justify-center border border-[#707070] bg-[#e0e0e0]">
          <span className="size-[5px] border border-black" />
        </button>
        <QuoteCard />
        <div className="absolute top-3 left-[1146px] h-[791px] w-px bg-[#b0b0b0]" />
      </div>
      <div className="mt-px h-px bg-[#8c8c8c]" />
    </main>
  );
}
